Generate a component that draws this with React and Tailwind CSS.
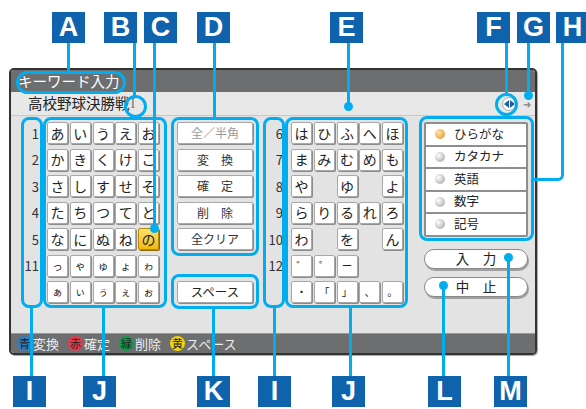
import React from 'react';

const leftRows = [
    { n: '1', keys: ['あ', 'い', 'う', 'え', 'お'] },
    { n: '2', keys: ['か', 'き', 'く', 'け', 'こ'] },
    { n: '3', keys: ['さ', 'し', 'す', 'せ', 'そ'] },
    { n: '4', keys: ['た', 'ち', 'つ', 'て', 'と'] },
    { n: '5', keys: ['な', 'に', 'ぬ', 'ね', 'の'] },
    { n: '11', keys: ['っ', 'ゃ', 'ゅ', 'ょ', 'ゎ'], small: true },
    { n: '', keys: ['ぁ', 'ぃ', 'ぅ', 'ぇ', 'ぉ'], small: true },
];

const rightRows = [
    { n: '6', keys: ['は', 'ひ', 'ふ', 'へ', 'ほ'] },
    { n: '7', keys: ['ま', 'み', 'む', 'め', 'も'] },
    { n: '8', keys: ['や', '', 'ゆ', '', 'よ'] },
    { n: '9', keys: ['ら', 'り', 'る', 'れ', 'ろ'] },
    { n: '10', keys: ['わ', '', 'を', '', 'ん'] },
    { n: '12', keys: ['゛', '゜', 'ー', '', ''], small: true },
    { n: '', keys: ['・', '「', '」', '、', '。'], small: true },
];

const funcs = ['全／半角', '変　換', '確　定', '削　除', '全クリア'];
const modes = ['ひらがな', 'カタカナ', '英語', '数字', '記号'];

const legend = [
    { c: '青', bg: 'bg-[#2d7fc4]', t: '変換' },
    { c: '赤', bg: 'bg-[#e5394d]', t: '確定' },
    { c: '緑', bg: 'bg-[#109a4a]', t: '削除' },
    { c: '黄', bg: 'bg-[#f4d20c]', t: 'スペース' },
];

// callout overlay
const labels = [
    { l: 'A', pos: 'left-[52px] top-[12px]' },
    { l: 'B', pos: 'left-[104px] top-[12px]' },
    { l: 'C', pos: 'left-[144px] top-[12px]' },
    { l: 'D', pos: 'left-[197px] top-[12px]' },
    { l: 'E', pos: 'left-[330px] top-[12px]' },
    { l: 'F', pos: 'left-[477px] top-[12px]' },
    { l: 'G', pos: 'left-[517px] top-[12px]' },
    { l: 'H', pos: 'left-[556px] top-[12px]' },
    { l: 'I', pos: 'left-[13px] top-[376px]' },
    { l: 'J', pos: 'left-[83px] top-[376px]' },
    { l: 'K', pos: 'left-[197px] top-[376px]' },
    { l: 'I', pos: 'left-[258px] top-[376px]' },
    { l: 'J', pos: 'left-[332px] top-[376px]' },
    { l: 'L', pos: 'left-[428px] top-[376px]' },
    { l: 'M', pos: 'left-[494px] top-[376px]' },
];

const lines = [
    'left-[67px] top-[43px] h-[30px]',
    'left-[133px] top-[43px] h-[53px]',
    'left-[153px] top-[43px] h-[185px]',
    'left-[213px] top-[43px] h-[75px]',
    'left-[347px] top-[43px] h-[63px]',
    'left-[505px] top-[43px] h-[51px]',
    'left-[527px] top-[43px] h-[53px]',
    'left-[30px] top-[306px] h-[70px]',
    'left-[102px] top-[306px] h-[70px]',
    'left-[212px] top-[307px] h-[69px]',
    'left-[273px] top-[306px] h-[70px]',
    'left-[349px] top-[306px] h-[70px]',
    'left-[442px] top-[285px] h-[91px]',
    'left-[507px] top-[257px] h-[119px]',
];

const dots = [
    'left-[150px] top-[224px]',
    'left-[344px] top-[102px]',
    'left-[524px] top-[91px]',
    'left-[439px] top-[281px]',
    'left-[504px] top-[253px]',
];

const boxes = [
    'left-[16px] top-[71px] w-[110px] h-[23px] rounded-full',
    'left-[124px] top-[95px] w-[23px] h-[23px] rounded-full',
    'left-[495px] top-[93px] w-[23px] h-[23px] rounded-full',
    'left-[21px] top-[117px] w-[22px] h-[191px] rounded-[8px]',
    'left-[43px] top-[117px] w-[124px] h-[191px] rounded-[8px]',
    'left-[171px] top-[117px] w-[88px] h-[139px] rounded-[8px]',
    'left-[171px] top-[274px] w-[88px] h-[35px] rounded-[8px]',
    'left-[263px] top-[117px] w-[22px] h-[191px] rounded-[8px]',
    'left-[285px] top-[117px] w-[123px] h-[191px] rounded-[8px]',
    'left-[419px] top-[116px] w-[115px] h-[125px] rounded-[8px]',
];

const Key = ({ ch, small, on }) => {
    if (!ch) return <div className="w-[21px] h-[22px]" />;
    return (
        <div
            className={
                on
                    ? 'w-[21px] h-[22px] flex items-center justify-center rounded-[2px] border border-[#b88a00] bg-gradient-to-b from-[#fde36a] to-[#f2b800] shadow-[1px_1px_0_#8a6a00] text-[14px] text-[#222]'
                    : small
                    ? 'w-[21px] h-[22px] flex items-center justify-center rounded-[2px] border border-[#a8a8a8] bg-white shadow-[1px_1px_0_#8c8c8c] text-[10.5px] text-[#222]'
                    : 'w-[21px] h-[22px] flex items-center justify-center rounded-[2px] border border-[#a8a8a8] bg-white shadow-[1px_1px_0_#8c8c8c] text-[14px] text-[#222]'
            }
        >
            {ch}
        </div>
    );
};

const KeyPad = ({ rows, numW }) => (
    <div className="flex">
        <div className={`${numW} flex flex-col gap-y-[4.5px] text-[13px] text-[#333]`}>
            {rows.map((r, i) => (
                <div key={i} className="h-[22px] flex items-center justify-end leading-none">{r.n}</div>
            ))}
        </div>
        <div className="ml-[8px] flex flex-col gap-y-[4.5px]">
            {rows.map((r, i) => (
                <div key={i} className="flex gap-x-[1.75px]">
                    {r.keys.map((k, j) => (
                        <Key key={j} ch={k} small={r.small} on={k === 'の'} />
                    ))}
                </div>
            ))}
        </div>
    </div>
);

const App = () => {
    return (
        <div className="relative w-[586px] h-[409px] bg-white overflow-hidden pt-[68px] pl-[9px] font-['Noto_Sans_CJK_JP',sans-serif]">
            <div className="w-[528px] h-[287px] flex flex-col border-2 border-[#333] rounded-[5px] overflow-hidden bg-[#e3e3e4] shadow-[1px_1px_1px_rgba(0,0,0,0.35)]">
                <div className="h-[22px] bg-[#6d6e70] flex items-center pl-[7px] text-[14.5px] text-white leading-none">
                    キーワード入力
                </div>
                <div className="h-[24px] bg-[#e8e8e9] border-b border-[#c8c8c8] flex items-center pl-[17px] text-[14.5px] text-[#222] leading-none">
                    <span>高校野球決勝戦</span>
                    <span className="ml-[1px] font-['Liberation_Serif',serif] text-[14px] text-[#777]">I</span>
                    <div className="flex-1" />
                    <div className="w-[14px] h-[14px] rounded-full bg-white border border-[#aaa] flex items-center justify-center gap-[1px]">
                        <span className="w-0 h-0 border-y-[4px] border-y-transparent border-r-[5px] border-r-[#1d5fa8]" />
                        <span className="w-0 h-0 border-y-[4px] border-y-transparent border-l-[5px] border-l-[#1d5fa8]" />
                    </div>
                    <span className="ml-[7px] mr-[4px] text-[10px] text-[#888]">➜</span>
                </div>
                <div className="h-[217px] flex pt-[6px]">
                    <KeyPad rows={leftRows} numW="w-[28px]" />
                    <div className="ml-[18px] w-[76px] flex flex-col gap-y-[4.5px]">
                        {funcs.map((f, i) => (
                            <div
                                key={i}
                                className={
                                    i === 0
                                        ? 'h-[22px] flex items-center justify-center bg-white border border-[#a8a8a8] rounded-[2px] shadow-[1px_1px_0_#8c8c8c] text-[12px] text-[#9a9a9a]'
                                        : 'h-[22px] flex items-center justify-center bg-white border border-[#a8a8a8] rounded-[2px] shadow-[1px_1px_0_#8c8c8c] text-[12px] text-[#333]'
                                }
                            >
                                {f}
                            </div>
                        ))}
                        <div className="h-[22px]" />
                        <div className="h-[22px] flex items-center justify-center bg-white border border-[#a8a8a8] rounded-[2px] shadow-[1px_1px_0_#8c8c8c] text-[12.5px] text-[#222]">
                            スペース
                        </div>
                    </div>
                    <KeyPad rows={rightRows} numW="w-[30px]" />
                    <div className="ml-[21px] w-[104px] flex flex-col">
                        <div className="bg-[#8e8e8e] p-[2px] flex flex-col gap-[2px] rounded-[2px]">
                            {modes.map((m, i) => (
                                <div key={i} className="h-[20.5px] bg-white flex items-center pl-[9px] gap-[9px] text-[12.5px] text-[#222]">
                                    <span
                                        className={
                                            i === 0
                                                ? 'w-[10px] h-[10px] rounded-full bg-[radial-gradient(circle_at_35%_35%,#ffe6b0,#e58a14)]'
                                                : 'w-[10px] h-[10px] rounded-full bg-[radial-gradient(circle_at_35%_35%,#ffffff,#9c9c9c)]'
                                        }
                                    />
                                    {m}
                                </div>
                            ))}
                        </div>
                        <div className="mt-[12px] h-[20px] rounded-full bg-white border border-[#8a8a8a] shadow-[1px_2px_0_#a0a0a0] flex items-center justify-center text-[13.5px] text-[#222]">
                            入　力
                        </div>
                        <div className="mt-[8px] h-[20px] rounded-full bg-white border border-[#8a8a8a] shadow-[1px_2px_0_#a0a0a0] flex items-center justify-center text-[13.5px] text-[#222]">
                            中　止
                        </div>
                    </div>
                </div>
                <div className="flex-1 bg-[#6d6e70] border-t border-[#9a9a9a] flex items-center pl-[6px] gap-[9px] text-[13px] text-[#eeeeee] leading-none">
                    {legend.map((g, i) => (
                        <div key={i} className="flex items-center gap-[1px]">
                            <span className={`${g.bg} w-[15px] h-[15px] rounded-full flex items-center justify-center text-[11px] text-[#222]`}>{g.c}</span>
                            <span>{g.t}</span>
                        </div>
                    ))}
                </div>
            </div>

            {boxes.map((b, i) => (
                <div key={i} className={`absolute ${b} border-[3px] border-[#00aeef]`} />
            ))}
            <div className="absolute left-[531px] top-[43px] w-[33px] h-[138px] border-r-[3px] border-b-[3px] border-[#00aeef] rounded-br-[6px]" />
            {lines.map((l, i) => (
                <div key={i} className={`absolute ${l} w-[3px] bg-[#00aeef]`} />
            ))}
            {dots.map((d, i) => (
                <div key={i} className={`absolute ${d} w-[9px] h-[9px] rounded-full bg-[#00aeef]`} />
            ))}
            {labels.map((b, i) => (
                <div
                    key={i}
                    className={`absolute ${b.pos} w-[33px] h-[31px] bg-[#0f63ad] flex items-center justify-center text-white text-[27px] font-bold leading-none font-['Liberation_Sans',sans-serif]`}
                >
                    {b.l}
                </div>
            ))}
        </div>
    );
};

export default App;
